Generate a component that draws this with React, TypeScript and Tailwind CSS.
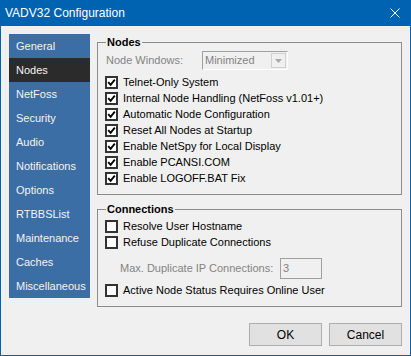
import React from "react";

const items = [
  "General",
  "Nodes",
  "NetFoss",
  "Security",
  "Audio",
  "Notifications",
  "Options",
  "RTBBSList",
  "Maintenance",
  "Caches",
  "Miscellaneous",
];

function Box({ checked }: { checked: boolean }) {
  return (
    <span className="w-[13px] h-[13px] border-2 border-[#333333] bg-white flex items-center justify-center shrink-0">
      {checked && (
        <svg width="9" height="9" viewBox="0 0 9 9">
          <path d="M1.2 4.2 L3.6 6.8 L7.8 1.6" stroke="#000" strokeWidth="1.9" fill="none" />
        </svg>
      )}
    </span>
  );
}

function Row({ label, checked }: { label: string; checked: boolean }) {
  return (
    <div className="h-[16px] flex items-center gap-[5px]">
      <Box checked={checked} />
      <span className="text-[11px] text-black leading-none whitespace-nowrap">{label}</span>
    </div>
  );
}

export default function App() {
  return (
    <div className="w-[411px] h-[356px] flex flex-col bg-[#0063B1] px-[1px] pb-[1px] font-['Liberation_Sans',Arial,sans-serif]">
      <div className="h-[26px] shrink-0 flex items-center justify-between pl-[4px] pr-[10px] text-white text-[12px]">
        <span>VADV32 Configuration</span>
        <svg width="10" height="10" viewBox="0 0 10 10">
          <path d="M0.5 0.5 L9.5 9.5 M9.5 0.5 L0.5 9.5" stroke="#fff" strokeWidth="1" />
        </svg>
      </div>
      <div className="flex-1 bg-[#F0F0F0] flex flex-col px-[8px] pt-[8px]">
        <div className="flex">
          <div className="w-[81px] h-[264px] bg-[#3A6EA5] flex flex-col shrink-0">
            {items.map((it) => (
              <div
                key={it}
                className={
                  "h-[24px] flex items-center pl-[7px] text-[11px] text-[#F4F4F4] " +
                  (it === "Nodes" ? "bg-[#2B2B2B]" : "")
                }
              >
                {it}
              </div>
            ))}
          </div>
          <div className="ml-[7px] flex-1 flex flex-col mt-[8px]">
            <div className="relative border border-[#8C8C8C] pl-[7px] pt-[8px] pb-[8px]">
              <span className="absolute -top-[7px] left-[8px] bg-[#F0F0F0] px-[1px] text-[11px] font-bold leading-[13px] text-black">
                Nodes
              </span>
              <div className="flex items-center h-[19px]">
                <span className="w-[96px] ml-[1px] text-[11px] text-[#838383]">Node Windows:</span>
                <div className="w-[86px] h-[19px] flex items-stretch border border-t-[#A0A0A0] border-l-[#A0A0A0] border-r-white border-b-white bg-[#F0F0F0]">
                  <span className="flex-1 flex items-center pl-[2px] text-[11px] text-[#838383]">Minimized</span>
                  <span className="w-[15px] m-[1px] border border-[#D0D0D0] flex items-center justify-center">
                    <svg width="7" height="4" viewBox="0 0 7 4">
                      <path d="M0 0 L7 0 L3.5 4 Z" fill="#A8A8A8" />
                    </svg>
                  </span>
                </div>
              </div>
              <div className="mt-[4px] flex flex-col">
                <Row label="Telnet-Only System" checked />
                <Row label="Internal Node Handling (NetFoss v1.01+)" checked />
                <Row label="Automatic Node Configuration" checked />
                <Row label="Reset All Nodes at Startup" checked />
                <Row label="Enable NetSpy for Local Display" checked />
                <Row label="Enable PCANSI.COM" checked />
                <Row label="Enable LOGOFF.BAT Fix" checked />
              </div>
            </div>
            <div className="relative mt-[14px] border border-[#8C8C8C] pl-[7px] pt-[8px] pb-[8px]">
              <span className="absolute -top-[7px] left-[8px] bg-[#F0F0F0] px-[1px] text-[11px] font-bold leading-[13px] text-black">
                Connections
              </span>
              <Row label="Resolve User Hostname" checked={false} />
              <Row label="Refuse Duplicate Connections" checked={false} />
              <div className="mt-[8px] h-[21px] flex items-center pl-[15px]">
                <span className="w-[160px] text-[11px] text-[#838383]">Max. Duplicate IP Connections:</span>
                <div className="w-[42px] h-[21px] border border-t-[#A0A0A0] border-l-[#A0A0A0] border-r-[#A0A0A0] border-b-[#A0A0A0] bg-[#F0F0F0] flex items-center pl-[2px] text-[11px] text-[#838383]">
                  3
                </div>
              </div>
              <div className="mt-[3px]">
                <Row label="Active Node Status Requires Online User" checked={false} />
              </div>
            </div>
          </div>
        </div>
        <div className="mt-[16px] flex justify-end gap-[7px]">
          <button className="w-[73px] h-[23px] bg-[#E1E1E1] border border-[#ADADAD] text-[12px] text-black">
            OK
          </button>
          <button className="w-[73px] h-[23px] bg-[#E1E1E1] border border-[#ADADAD] text-[12px] text-black">
            Cancel
          </button>
        </div>
      </div>
    </div>
  );
}
